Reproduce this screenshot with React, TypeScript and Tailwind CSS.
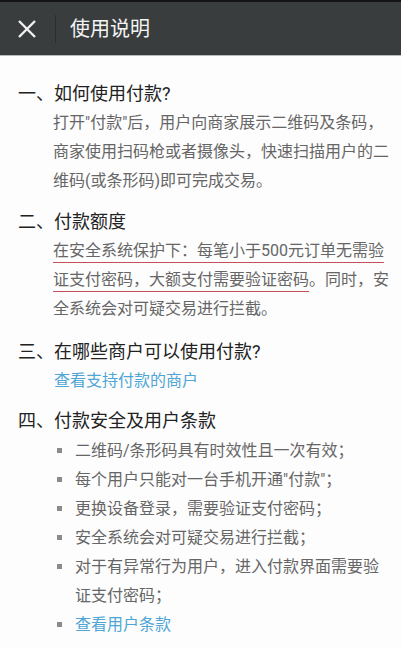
const bullets: { text: string; link?: boolean }[] = [
  { text: '二维码/条形码具有时效性且一次有效；' },
  { text: '每个用户只能对一台手机开通"付款"；' },
  { text: '更换设备登录，需要验证支付密码；' },
  { text: '安全系统会对可疑交易进行拦截；' },
  { text: '对于有异常行为用户，进入付款界面需要验证支付密码；' },
  { text: '查看用户条款', link: true },
]

function Heading({ children }: { children: React.ReactNode }) {
  return <h2 className="pl-[18px] text-[18px] leading-[28px] text-[#222]">{children}</h2>
}

function CloseIcon() {
  return (
    <svg viewBox="0 0 20 20" className="h-[20px] w-[20px]" fill="none" stroke="#f2f2f2" strokeWidth={2.4}>
      <path d="M2 2 18 18M18 2 2 18" />
    </svg>
  )
}

export default function App() {
  return (
    <div className="min-h-[649px] w-[401px] bg-[#fdfdfd] font-['Roboto','Noto_Sans_CJK_SC',sans-serif]">
      <div className="h-[2px] bg-[#141414]" />
      <header className="flex h-[53px] items-center bg-[#393d3e]">
        <div className="w-[55px] pl-[17px]">
          <CloseIcon />
        </div>
        <div className="h-[28px] w-px bg-[#2b2e2f]" />
        <h1 className="pl-[14px] text-[20px] text-[#f4f4f4]">使用说明</h1>
      </header>
      <div className="h-px bg-[#b9b9b9]" />

      <main className="pt-[24px]">
        <section>
          <Heading>一、如何使用付款?</Heading>
          <p className="w-[395px] pl-[53px] pr-[2px] text-[16px] leading-[29px] text-[#666]">
            打开"付款"后，用户向商家展示二维码及条码，商家使用扫码枪或者摄像头，快速扫描用户的二维码(或条形码)即可完成交易。
          </p>
        </section>

        <section className="mt-[13px]">
          <Heading>二、付款额度</Heading>
          <p className="w-[395px] pl-[53px] pr-[2px] text-[16px] leading-[29px] text-[#666]">
            <span className="underline decoration-[#c4505a] decoration-1 underline-offset-[6px]">
              在安全系统保护下：每笔小于500元订单无需验证支付密码，大额支付需要验证密码
            </span>
            。同时，安全系统会对可疑交易进行拦截。
          </p>
        </section>

        <section className="mt-[15px]">
          <Heading>三、在哪些商户可以使用付款?</Heading>
          <p className="pl-[54px] text-[16px] leading-[29px] text-[#4fa5d5]">查看支持付款的商户</p>
        </section>

        <section className="mt-[12px]">
          <Heading>四、付款安全及用户条款</Heading>
          <ul className="mt-px w-[391px] pl-[57px] text-[16px] leading-[29px] text-[#666]">
            {bullets.map((b) => (
              <li key={b.text} className="flex">
                <span className="mt-[12px] h-[5px] w-[5px] shrink-0 bg-[#8a8a8a]" />
                <span className={`pl-[13px] ${b.link ? 'text-[#4fa5d5]' : ''}`}>{b.text}</span>
              </li>
            ))}
          </ul>
        </section>
      </main>
    </div>
  )
}
